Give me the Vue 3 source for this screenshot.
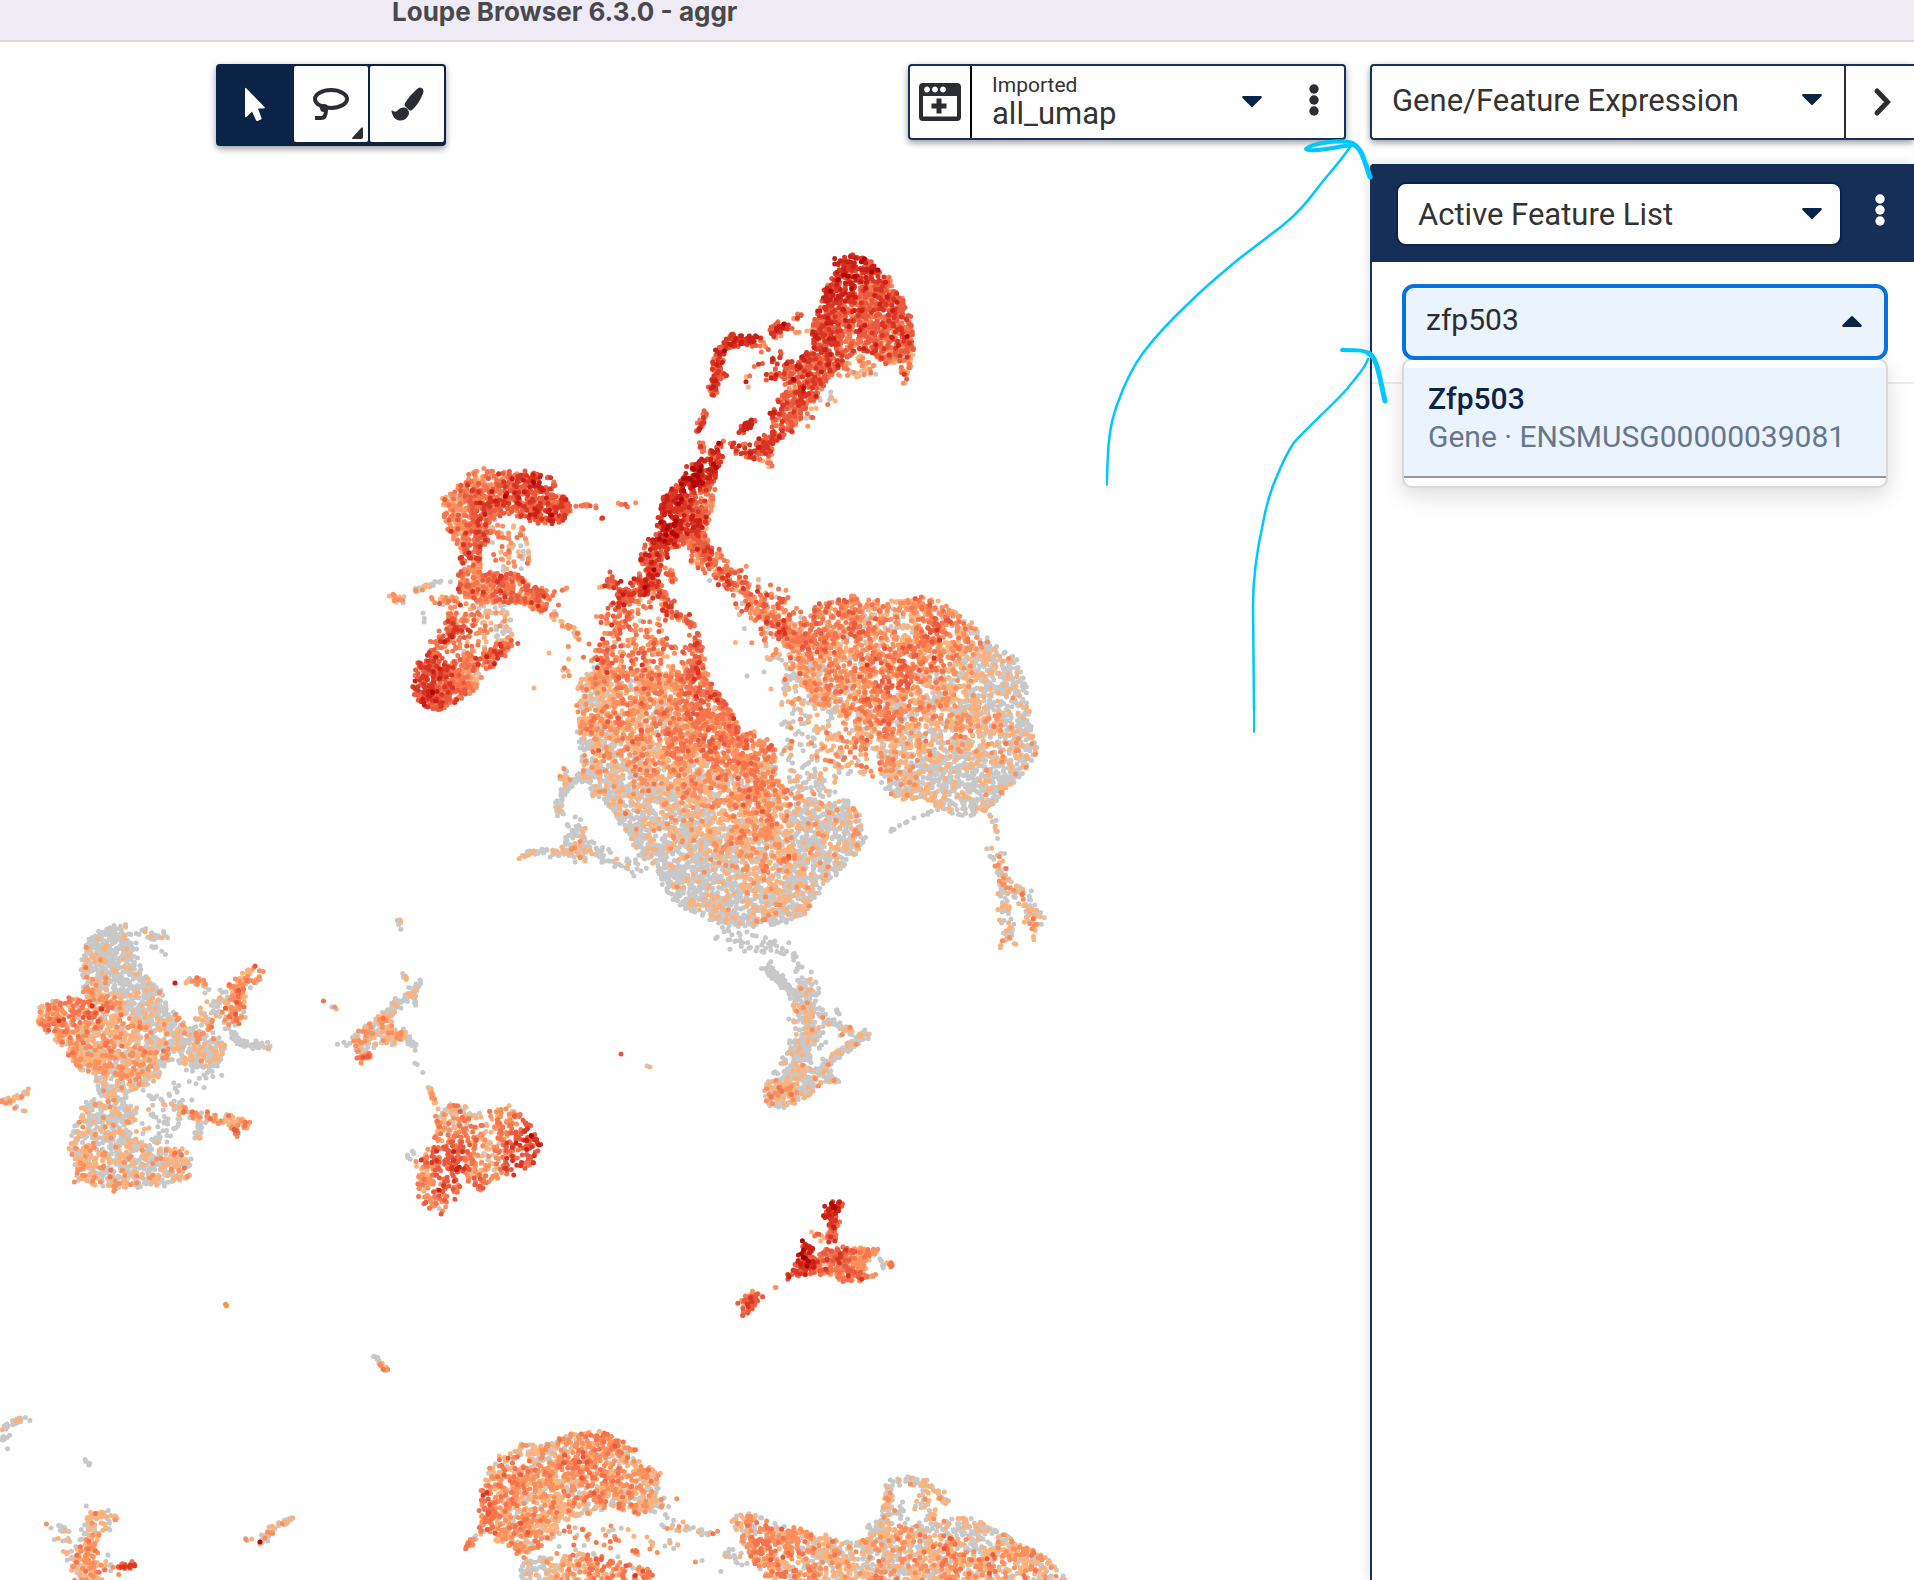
<script setup>
import { ref } from 'vue'

const COLORS = ['#c8c8c8', '#fdb27c', '#fc8f5b', '#f6734e', '#e85a3f', '#da3522', '#c91f16', '#b30505', '#8c0000']

// Filled clusters: o = outline, d = points per square unit, h = [x, y, expression level] anchors
const clusters = [
  { d: 0.15, o: [835,260,853,253,870,258,880,273,893,282,900,297,907,308,913,322,915,345,912,362,907,385,902,383,902,363,880,363,873,353,853,353,840,367,830,377,823,390,810,407,793,430,773,443,770,475,765,463,753,460,757,440,773,430,770,413,780,397,787,380,762,377,787,363,813,350,813,327,823,297,832,277], h: [850,260,6.3,826,300,5.6,880,310,4.5,860,330,4.3,905,345,4.2,850,350,4.6,800,370,5,790,400,4.8,765,450,5.2,905,378,2.4,770,472,2.4,795,425,4] },
  { d: 0.05, o: [853,353,880,363,880,375,850,382,835,380,840,367], h: [860,365,2] },
  { d: 0.02, o: [823,390,842,395,815,425,800,425], h: [820,405,2.6] },
  { d: 0.15, o: [723,440,722,460,715,477,712,507,705,530,712,553,695,547,673,550,650,550,657,530,663,497,680,483,687,467,707,457,715,445], h: [695,472,7,672,520,6.5,710,505,2.8,700,545,4,718,448,5.6,680,500,6,697,495,5,690,525,5] },
  { d: 0.14, o: [473,470,513,472,540,473,557,482,550,492,567,497,573,510,557,525,537,525,527,517,503,515,490,520,492,540,480,547,480,573,513,573,530,583,550,607,540,612,513,603,480,603,458,593,460,560,457,543,443,520,443,500,460,483], h: [530,480,5.2,455,500,3,550,510,4.9,485,495,4.5,450,520,2.7,480,540,4.2,470,590,2.8,515,590,3.5,475,473,2] },
  { d: 0.035, o: [492,520,527,525,530,570,490,572], h: [500,540,2.8,525,555,1] },
  { d: 0.045, o: [450,605,510,600,515,640,500,655,450,660,445,630], h: [460,630,3.5,500,620,1] },
  { d: 0.16, o: [420,660,445,665,470,655,480,670,478,688,460,700,440,710,418,705,413,690,415,670], h: [420,690,5.4,440,700,4.9,472,680,2.4,430,670,5] },
  { d: 0.12, o: [578,680,578,703,580,747,583,773,590,793,612,810,637,850,658,870,663,890,683,907,720,923,753,927,787,923,807,913,817,893,840,870,855,857,865,840,860,813,847,800,827,803,793,793,777,777,775,747,753,733,740,730,733,713,720,693,707,680,700,653,683,673,657,670,627,670,597,667], h: [590,690,1,620,710,2.3,600,760,1,680,735,2.5,715,700,3.8,720,740,3,760,780,2.3,770,800,2.1,700,780,1.4,650,760,1.3,620,800,0,690,830,0.2,740,840,1.2,770,850,1.4,700,880,-0.3,740,910,0,800,880,0,840,840,0.2,810,820,-0.1,650,830,0,640,680,2,590,790,0.2,670,860,-0.3] },
  { d: 0.035, o: [600,640,660,640,700,650,700,680,590,680], h: [640,660,2.6] },
  { d: 0.1, o: [800,623,820,603,853,597,887,600,930,597,957,613,990,640,1020,660,1027,693,1028,720,1035,737,1038,753,1023,773,1007,790,993,810,963,817,937,807,923,800,893,797,883,777,877,753,857,740,857,717,833,703,813,707,800,680,797,650], h: [900,660,3,890,680,3.2,920,650,3,835,615,3.1,800,640,2.8,870,620,2.5,940,620,3.1,960,620,2,900,628,1.2,860,690,2.2,880,720,2.5,840,660,1.8,920,700,1.6,960,690,1,990,660,0.4,1010,680,-0.2,980,720,0.9,1020,740,0.7,1000,700,0.1,940,740,1,900,760,1.1,960,790,-0.2,990,790,-0.1,930,780,0.4] },
  { d: 0.035, o: [783,690,800,670,860,715,870,760,880,780,845,775,830,800,790,790,780,740], h: [800,720,1,850,760,2,810,780,0.7] },
  { d: 0.16, o: [765,1085,780,1078,800,1065,830,1065,838,1080,820,1085,810,1095,785,1108,767,1106,764,1090], h: [800,1075,0,780,1098,0.9] },
  { d: 0.16, o: [785,1280,797,1260,803,1243,812,1245,812,1258,823,1250,847,1247,880,1250,867,1260,865,1277,850,1283,830,1275,810,1273], h: [800,1255,6.4,790,1272,5.4,835,1255,4,850,1275,3.5,868,1253,2.4,825,1265,3.6] },
  { d: 0.13, o: [84,943,107,925,125,925,134,943,139,967,161,990,175,1013,189,1028,214,1030,225,1047,218,1067,193,1067,171,1060,157,1077,139,1090,125,1100,100,1097,95,1077,79,1070,64,1047,46,1033,38,1023,41,1003,82,997,84,980,82,963], h: [110,935,-0.5,95,960,0.3,130,980,-0.6,112,970,-0.2,80,1010,2.4,95,1010,2.9,50,1010,2.2,60,1035,2,110,1030,1.4,100,1055,1.3,145,1040,0.9,150,1010,-0.2,190,1040,0.3,210,1055,-0.2,130,1075,0.9,115,1095,0] },
  { d: 0.11, o: [86,1100,118,1100,138,1107,137,1140,171,1147,191,1153,188,1177,175,1183,136,1187,112,1190,75,1180,73,1160,68,1147,75,1127], h: [75,1150,1.1,110,1175,0.9,100,1110,0.2,185,1165,0.9,120,1140,0.1,150,1165,0.1] },
  { d: 0.025, o: [140,1095,185,1085,180,1130,165,1145,140,1140], h: [160,1120,-0.5] },
  { d: 0.13, o: [352,1035,375,1018,392,1012,392,1030,407,1038,400,1045,378,1043,365,1055,355,1050], h: [380,1030,1.2,355,1045,0.7] },
  { d: 0.08, o: [436,1107,457,1103,482,1112,507,1107,529,1120,543,1148,532,1167,514,1173,500,1177,479,1190,464,1177,457,1197,443,1213,425,1212,418,1193,416,1160,434,1147], h: [440,1112,1,500,1112,2.2,530,1130,5.5,540,1148,5.7,520,1150,4.7,525,1165,5.3,470,1135,3.6,460,1150,5,445,1170,5,425,1180,2,440,1200,3.7,435,1125,3.6,480,1160,1.2,480,1185,3.8,475,1120,1.6,455,1125,1.3,490,1145,1.8] },
  { d: 0.11, o: [86,1515,95,1512,118,1512,114,1530,100,1533,95,1545,98,1560,100,1582,75,1582,70,1562,63,1550,80,1545,82,1525], h: [90,1550,1.8,75,1540,0.6] },
  { d: 0.11, o: [523,1442,542,1445,572,1433,607,1432,635,1448,646,1463,660,1475,656,1490,664,1507,644,1515,619,1508,599,1510,582,1517,558,1523,556,1537,533,1550,521,1560,513,1547,497,1543,493,1533,480,1533,478,1503,487,1473,503,1457], h: [490,1500,2.8,520,1480,2.1,580,1460,2.6,620,1460,2.2,630,1490,2.3,560,1500,1.4,520,1530,1.8,540,1510,1.2,650,1505,1,540,1445,1] },
  { d: 0.08, o: [520,1560,560,1557,590,1550,620,1560,650,1570,655,1582,522,1582], h: [530,1570,0,570,1575,1.3,610,1570,3] },
  { d: 0.014, o: [555,1525,640,1520,660,1560,560,1560], h: [600,1540,2.2] },
  { d: 0.1, o: [731,1522,742,1512,754,1515,770,1520,795,1528,823,1535,848,1542,864,1540,868,1527,885,1517,897,1527,921,1525,942,1523,962,1517,991,1527,1019,1543,1048,1557,1060,1573,1075,1582,765,1582,760,1567,746,1557,741,1535], h: [760,1545,2.7,745,1525,1.4,800,1545,1.7,850,1560,1,900,1560,1,950,1550,1.8,1000,1570,1.8,1030,1560,1.2,990,1530,0,870,1540,0.6,960,1522,0] },
]

// Thin trails of cells: [centre line, width, count, expression level]
const trails = [
  [[713,390,716,372,718,355,727,342,745,340,758,341], 8, 150, 5.4],
  [[771,335,785,325], 9, 45, 5], [[790,321,803,312], 4, 7, 3.5], [[790,331,815,331], 4, 8, 2.4],
  [[755,345,782,352,765,362], 12, 18, 4.6], [[712,375,727,374], 8, 16, 4.4], [[714,385,712,398], 5, 12, 5],
  [[705,412,697,433], 4, 26, 5], [[700,442,704,452], 5, 9, 4], [[742,430,752,420], 6, 34, 5.6],
  [[725,445,755,455], 10, 26, 5], [[715,380,765,378], 16, 6, 4],
  [[655,545,650,575,645,590], 17, 150, 5.5], [[610,580,628,595,622,608], 9, 60, 4.6],
  [[645,585,620,600], 12, 45, 5], [[655,585,668,608,690,622,697,645,695,670], 11, 120, 4.3],
  [[671,570,673,582], 6, 22, 3.6], [[625,605,610,635,600,665], 26, 85, 3.6], [[650,600,640,640,655,660], 34, 75, 3.4],
  [[695,545,712,562,730,578,753,602,780,627,807,647], 20, 340, 3.7], [[765,590,800,615], 14, 22, 3.4], [[750,600,790,640], 40, 50, 1.5],
  [[575,506,597,506], 3, 9, 3], [[613,505,644,503], 3, 5, 4.5], [[601,517,603,519], 1, 3, 5],
  [[532,590,557,598], 9, 18, 4], [[560,590,571,588], 2, 3, 2.6], [[597,588,610,586], 3, 5, 3.4],
  [[391,597,404,600], 5, 20, 2], [[404,597,435,582], 4, 20, 0.6], [[435,582,452,581], 2, 4, -2],
  [[432,600,458,600], 6, 28, 1.5], [[423,610,424,622], 1, 3, -2], [[545,610,580,638], 7, 26, 2.2],
  [[571,640,566,675], 9, 8, 2.5], [[455,620,440,648,425,665], 12, 90, 4.6], [[510,645,475,665], 13, 80, 4],
  [[770,662,775,657], 6, 10, 0.5], [[785,690,790,665], 8, 12, -0.5], [[785,625,800,670], 24, 80, 1.6],
  [[940,808,910,820,880,838], 4, 12, -0.5], [[990,812,998,838], 5, 10, 0.6],
  [[995,850,1003,870,1013,890,1028,905,1036,920,1029,930], 12, 110, 1], [[1003,890,1005,920,1012,942], 12, 50, 0.6],
  [[585,775,568,785,560,800,559,815], 6, 80, -0.6], [[563,770,566,785], 7, 16, 1.4],
  [[574,825,577,848,588,855], 17, 75, 0.2], [[520,855,535,853,580,853], 6, 60, 0.2], [[590,850,640,868], 16, 40, -0.8],
  [[725,932,760,950,795,945], 17, 50, -2], [[763,967,775,975,797,998], 7, 75, -2], [[795,955,798,972], 4, 14, -2],
  [[805,983,806,1020,812,1045], 19, 220, 0], [[815,1015,835,1025,860,1035], 8, 45, 0.2],
  [[868,1033,850,1045,825,1065], 7, 90, 0.1], [[835,1010,842,1014], 3, 6, -2], [[805,1045,790,1070], 22, 110, -0.5],
  [[825,1080,840,1081], 5, 14, 0], [[838,1205,825,1215], 8, 45, 6], [[833,1215,833,1240], 9, 50, 4.5],
  [[812,1233,840,1240], 10, 16, 2.8], [[888,1264,893,1265], 3, 7, 2.4], [[880,1257,883,1270], 4, 5, -2],
  [[865,1280,876,1273], 4, 7, 3], [[742,1315,750,1302,757,1296], 11, 60, 4.2], [[771,1290,776,1287], 1, 2, 1.5],
  [[140,932,170,938], 7, 20, 0.4], [[150,945,165,953], 4, 6, -2], [[188,981,208,984], 8, 24, 1.6],
  [[257,975,245,980,235,995,233,1025], 14, 140, 2.2], [[225,990,210,1020,195,1030], 18, 70, 1.1],
  [[232,1035,245,1045,270,1046], 5, 60, -2], [[150,1070,215,1075,175,1095], 22, 24, -1],
  [[176,1105,190,1112,215,1120,250,1124], 9, 110, 1.6], [[232,1128,238,1134], 5, 16, 2.6], [[200,1115,197,1138], 6, 28, -0.2],
  [[0,1103,15,1098,30,1091], 5, 34, 0.9], [[16,1107,24,1110], 3, 4, 0.8], [[399,919,399,925], 2, 6, 1], [[400,928,401,931], 1, 1, -2],
  [[403,974,406,979], 3, 6, 0], [[420,982,410,995,395,1005,385,1018], 6, 80, 0], [[414,990,416,1006], 3, 9, -2],
  [[360,1058,370,1056], 6, 18, 3], [[405,1037,418,1050], 4, 16, -1], [[395,1040,405,1033], 6, 12, 2],
  [[317,997,350,1018], 2, 4, 1.5], [[335,1044,350,1043], 4, 4, -1], [[413,1060,425,1075], 2, 3, -2],
  [[428,1085,433,1097,437,1106], 4, 16, 1.2], [[408,1157,416,1150], 4, 6, -2],
  [[226,1304,226,1306], 1, 3, 2.4], [[374,1354,380,1363], 3, 9, -2], [[379,1363,389,1372], 3, 11, 1.8],
  [[0,1429,22,1419], 4, 28, -0.2], [[25,1417,30,1421], 1, 2, -2], [[0,1440,9,1435], 4, 8, -2], [[8,1449,8,1450], 1, 1, -2],
  [[85,1460,91,1465], 2, 7, -2], [[86,1506,86,1507], 1, 1, -2], [[50,1528,60,1525,68,1540,52,1540], 8, 18, 0.3],
  [[118,1566,135,1566], 5, 24, 4.4], [[100,1555,115,1575], 12, 12, 1.4], [[291,1516,280,1525,268,1535,259,1546], 6, 44, 0.8],
  [[244,1540,252,1539], 2, 4, 2.4], [[463,1548,478,1537], 4, 20, 1.8], [[677,1499,677,1500], 1, 1, 3],
  [[663,1524,715,1535], 9, 32, 1.4], [[650,1545,690,1545], 12, 8, 1], [[650,1480,670,1520], 10, 12, -0.5],
  [[887,1517,890,1485,905,1480,925,1483,947,1502], 7, 110, 0.5], [[918,1490,925,1505,938,1520], 12, 34, 1.1],
  [[895,1505,910,1520], 14, 14, -1], [[722,1550,745,1565], 14, 18, -1], [[690,1557,718,1575], 8, 3, 1.5],
]

const singles = [[175,983,6], [260,1542,7], [621,1054,4], [647,1066,0], [650,1067,1], [747,676,0], [764,672,0], [771,689,1], [534,688,1], [549,653,1]]

let seed = 20461
function rand() {
  seed = (seed + 0x6d2b79f5) | 0
  let t = Math.imul(seed ^ (seed >>> 15), 1 | seed)
  t = (t + Math.imul(t ^ (t >>> 7), 61 | t)) ^ t
  return ((t ^ (t >>> 14)) >>> 0) / 4294967296
}
const gauss = () => rand() + rand() + rand() + rand() - 2

const layers = COLORS.map(() => [])
function put(x, y, level) {
  layers[level].push(`M${x.toFixed(1)} ${y.toFixed(1)}h0`)
}
// Expression varies per cell, with a slow ripple so that neighbours resemble each other
function plot(x, y, heat) {
  const ripple = heat > 0.5 ? Math.sin(x / 8 + y / 19) * Math.sin(y / 9 - x / 23) * 0.5 : 0
  const level = Math.round(heat * 0.89 - 0.5 + ripple + gauss() * 1.75)
  put(x, y, Math.max(0, Math.min(COLORS.length - 1, level)))
}
function inside(o, x, y) {
  let hit = false
  for (let i = 0, j = o.length - 2; i < o.length; j = i, i += 2) {
    if (o[i + 1] > y !== o[j + 1] > y && x < ((o[j] - o[i]) * (y - o[i + 1])) / (o[j + 1] - o[i + 1]) + o[i]) hit = !hit
  }
  return hit
}
function heatAt(h, x, y) {
  let sum = 0
  let weight = 0
  for (let i = 0; i < h.length; i += 3) {
    const d2 = (x - h[i]) ** 2 + (y - h[i + 1]) ** 2 + 60
    const w = 1 / (d2 * d2)
    sum += w * h[i + 2]
    weight += w
  }
  return sum / weight
}
for (const { o, d, h } of clusters) {
  const xs = o.filter((_, i) => i % 2 === 0)
  const ys = o.filter((_, i) => i % 2 === 1)
  const x0 = Math.min(...xs), x1 = Math.max(...xs), y0 = Math.min(...ys), y1 = Math.max(...ys)
  const tries = Math.round((x1 - x0) * (y1 - y0) * d)
  for (let i = 0; i < tries; i++) {
    const x = x0 + rand() * (x1 - x0)
    const y = y0 + rand() * (y1 - y0)
    if (inside(o, x, y)) plot(x + gauss() * 2, y + gauss() * 2, heatAt(h, x, y))
  }
}
for (const [line, width, count, heat] of trails) {
  const parts = []
  let total = 0
  for (let i = 0; i + 3 < line.length; i += 2) {
    const len = Math.hypot(line[i + 2] - line[i], line[i + 3] - line[i + 1])
    parts.push([i, len])
    total += len
  }
  for (let n = 0; n < count; n++) {
    let t = rand() * total
    let k = 0
    while (k < parts.length - 1 && t > parts[k][1]) t -= parts[k++][1]
    const [i, len] = parts[k]
    const f = t / len
    plot(
      line[i] + f * (line[i + 2] - line[i]) + gauss() * width * 0.6,
      line[i + 1] + f * (line[i + 3] - line[i + 1]) + gauss() * width * 0.6,
      heat,
    )
  }
}
singles.forEach(([x, y, level]) => put(x, y, level))
const paths = layers.map((pts, i) => ({ color: COLORS[i], d: pts.join('') }))

const tool = ref('pointer')
const query = ref('zfp503')
</script>

<template>
  <div class="window">
    <header class="titlebar"><h1>Loupe Browser 6.3.0 - aggr</h1></header>
    <main class="workspace">
      <section class="stage" aria-label="Projection">
        <svg class="plot" viewBox="0 42 1370 1538" preserveAspectRatio="xMinYMin slice" aria-hidden="true">
          <path v-for="p in paths" :key="p.color" :d="p.d" :stroke="p.color" />
        </svg>
        <div class="tools" role="toolbar" aria-label="Selection tools">
          <button type="button" class="tool" :class="{ active: tool === 'pointer' }" aria-label="Pointer" @click="tool = 'pointer'">
            <svg width="36" height="36" viewBox="0 0 36 36"><path fill="currentColor" d="M8 3q0-2 1.500-.5L27.500 21q1 1.500-1 1.500h-5.500l3.500 9.500q.5 1-.5 1.500l-3.500 1.500q-1 .3-1.500-.7L15 25.500l-5.500 5.500q-1.500 1-1.500-.8z" /></svg>
          </button>
          <button type="button" class="tool" :class="{ active: tool === 'lasso' }" aria-label="Lasso" @click="tool = 'lasso'">
            <svg width="40" height="36" viewBox="0 0 40 36"><g fill="none" stroke="currentColor" stroke-width="4"><ellipse cx="20" cy="13" rx="16" ry="9" /><path d="M4 32h6q5 0 5-8" /></g><circle cx="13" cy="22" r="4" fill="currentColor" /></svg>
            <svg class="corner" width="12" height="12" viewBox="0 0 12 12"><path fill="currentColor" d="M1 12Q-1 12 1 10L9 1q2-2 2 1v8q0 2-2 2z" /></svg>
          </button>
          <button type="button" class="tool" :class="{ active: tool === 'brush' }" aria-label="Brush" @click="tool = 'brush'">
            <svg width="36" height="36" viewBox="0 0 36 36"><path fill="currentColor" d="M28 3q3-3 6 0 1 2 0 4.500Q30 18 23 24q-1.500 1-3 0l-4-4q-1-1.500 0-3Q21 9 28 3zM14 21.500q2-.5 4 1l1 1.500q2 3 0 6-3 5-9 4.500Q4 33 2.500 25.500q0-1.500 1.500-.5 3 1.500 4.500-.5 2-2.500 5.500-3z" /></svg>
          </button>
        </div>
        <div class="projection">
          <button type="button" class="add" aria-label="Add projection">
            <svg width="42" height="38" viewBox="0 0 42 38"><path fill="#2b2d33" fill-rule="evenodd" d="M4 0h34q4 0 4 4v30q0 4-4 4H4q-4 0-4-4V4q0-4 4-4zM4 13v20.500h34V13zM8 3.500a3 3 0 1 0 .01 0zM16 3.500a3 3 0 1 0 .01 0zM24 3.500a3 3 0 1 0 .01 0z" /><path stroke="#2b2d33" stroke-width="5" d="M12.500 23h15M20 15.500v15" /></svg>
          </button>
          <div class="source">
            <label for="projection">Imported</label>
            <select id="projection"><option>all_umap</option></select>
          </div>
          <svg class="caret" width="20" height="12" viewBox="0 0 20 12"><path d="M1 0h18q1.500 1 .3 2.300L11 10.500q-1 1-2 0L.7 2.300Q-.5 1 1 0z" /></svg>
          <button type="button" class="dots" aria-label="Projection menu">
            <svg width="10" height="32" viewBox="0 0 10 32"><g fill="currentColor"><circle cx="5" cy="5" r="4.700" /><circle cx="5" cy="16" r="4.700" /><circle cx="5" cy="27" r="4.700" /></g></svg>
          </button>
        </div>
      </section>

      <aside class="side">
        <div class="mode">
          <div class="mode-select">
            <select aria-label="Analysis mode"><option>Gene/Feature Expression</option></select>
            <svg class="caret" width="20" height="12" viewBox="0 0 20 12"><path d="M1 0h18q1.500 1 .3 2.300L11 10.500q-1 1-2 0L.7 2.300Q-.5 1 1 0z" /></svg>
          </div>
          <button type="button" class="collapse" aria-label="Collapse panel">
            <svg width="20" height="30" viewBox="0 0 20 30"><path fill="none" stroke="#2b2d33" stroke-width="5" stroke-linecap="round" d="M4 4l10.500 11L4 26" /></svg>
          </button>
        </div>
        <div class="panel">
          <div class="panel-head">
            <div class="list-select">
              <select aria-label="Feature list"><option>Active Feature List</option></select>
              <svg class="caret" width="20" height="12" viewBox="0 0 20 12"><path d="M1 0h18q1.500 1 .3 2.300L11 10.500q-1 1-2 0L.7 2.300Q-.5 1 1 0z" /></svg>
            </div>
            <button type="button" class="dots light" aria-label="Feature list menu">
              <svg width="10" height="32" viewBox="0 0 10 32"><g fill="currentColor"><circle cx="5" cy="5" r="4.700" /><circle cx="5" cy="16" r="4.700" /><circle cx="5" cy="27" r="4.700" /></g></svg>
            </button>
          </div>
          <div class="search">
            <div class="combo">
              <input v-model="query" type="text" role="combobox" aria-label="Search features" aria-expanded="true" aria-controls="matches" />
              <svg class="caret" width="20" height="12" viewBox="0 0 20 12"><path d="M1 11h18q1.500-1 .3-2.300L11 .5q-1-1-2 0L.7 8.700Q-.5 10 1 11z" /></svg>
            </div>
            <ul id="matches" class="matches" role="listbox">
              <li role="option" aria-selected="true">
                <strong>Zfp503</strong>
                <span>Gene · ENSMUSG00000039081</span>
              </li>
            </ul>
          </div>
        </div>
      </aside>

      <svg class="notes" viewBox="0 42 1914 1538" preserveAspectRatio="xMinYMin meet" aria-hidden="true">
        <g fill="none" stroke="#00c8ff" stroke-linecap="round" stroke-linejoin="round">
          <path stroke-width="2" d="M1107 485V470M1254 732V690" />
          <path stroke-width="2.500" d="M1107 478C1108 450 1108 430 1117 405C1124 385 1132 368 1143 353C1158 333 1174 317 1190 302C1206 286 1223 272 1240 258L1282 226C1300 212 1310 198 1323 181C1337 165 1343 158 1352 144" />
          <path stroke-width="4" d="M1353 143C1340 139 1312 143 1306 149C1312 153 1335 147 1352 145" />
          <path stroke-width="5" d="M1350 144C1361 144 1364 160 1370 177" />
          <path stroke-width="2.500" d="M1254 710L1253 605C1253 575 1257 550 1263 523C1267 501 1271 489 1277 476C1282 464 1287 453 1293 444C1302 432 1330 408 1347 389C1358 375 1366 367 1368 359" />
          <path stroke-width="4" d="M1342 350C1358 350 1366 350 1371 355" />
          <path stroke-width="5" d="M1368 353C1377 355 1380 380 1385 401" />
        </g>
      </svg>
    </main>
  </div>
</template>

<style>
body {
  margin: 0;
}
</style>

<style scoped>
.window {
  display: flex;
  flex-direction: column;
  min-height: 100vh;
  overflow: hidden;
  background: #fff;
  color: #333;
  font-family: Roboto, "Liberation Sans", sans-serif;
}
.window *,
.window {
  box-sizing: border-box;
}
button,
select,
input {
  margin: 0;
  padding: 0;
  border: 0;
  background: none;
  color: inherit;
  font: inherit;
  outline: 0;
}
select {
  appearance: none;
  width: 100%;
  cursor: pointer;
}
button {
  display: flex;
  align-items: center;
  justify-content: center;
  cursor: pointer;
}
svg {
  display: block;
  flex: none;
}
.titlebar {
  padding: 0 0 16px 392px;
  border-bottom: 2px solid #d9d8dc;
  background: #eeebf5;
}
h1 {
  margin: 0;
  color: #49484b;
  font: 700 26px/24px Inter, sans-serif;
}
.workspace {
  position: relative;
  display: flex;
  flex: 1;
}
.stage {
  position: relative;
  display: flex;
  flex: 1;
  align-items: flex-start;
  justify-content: space-between;
  padding: 22px 24px 0 216px;
}
.plot,
.notes {
  position: absolute;
  inset: 0;
  width: 100%;
  height: 100%;
}
.plot path {
  fill: none;
  stroke-width: 5;
  stroke-linecap: round;
}
.notes {
  z-index: 3;
  pointer-events: none;
}
.tools,
.projection {
  position: relative;
  display: flex;
  box-shadow: 0 3px 6px rgba(0, 0, 0, 0.35), 0 0 14px rgba(0, 0, 0, 0.06);
}
.tools {
  gap: 2px;
  height: 82px;
  padding: 2px 2px 4px;
  border-radius: 4px;
  background: #0b2347;
}
.tool {
  position: relative;
  width: 74px;
  border-radius: 2px;
  background: #fff;
  color: #2b2d33;
}
.tool.active {
  background: #0b2347;
  color: #fff;
}
.corner {
  position: absolute;
  right: 4px;
  bottom: 3px;
}
.projection {
  align-items: stretch;
  width: 438px;
  height: 76px;
  border: 2px solid #15305a;
  border-radius: 4px;
  background: #fff;
}
.add {
  width: 62px;
  border-right: 2px solid #000;
}
.source {
  display: flex;
  flex: 1;
  flex-direction: column;
  padding: 6px 0 0 20px;
}
.source label {
  font-size: 21px;
  line-height: 26px;
}
.source select {
  font-size: 31px;
  line-height: 32px;
}
.caret {
  align-self: center;
  fill: #0b2347;
  pointer-events: none;
}
.dots {
  color: #2b2d33;
}
.projection .dots {
  width: 20px;
  margin: 0 20px 4px 42px;
}
.side {
  display: flex;
  flex: none;
  flex-direction: column;
  gap: 24px;
  width: 544px;
  padding-top: 22px;
}
.mode {
  display: flex;
  height: 76px;
  border: 2px solid #15305a;
  border-right: 0;
  border-radius: 4px 0 0 4px;
  background: #fff;
  box-shadow: 0 3px 6px rgba(0, 0, 0, 0.35), 0 0 14px rgba(0, 0, 0, 0.06);
  font-size: 31px;
}
.mode-select {
  display: flex;
  flex: 1;
  padding: 0 22px 4px 20px;
}
.collapse {
  width: 70px;
  padding-left: 6px;
  border-left: 2px solid #2b2d33;
}
.panel {
  display: flex;
  flex: 1;
  flex-direction: column;
  border-left: 2px solid #15305a;
  border-radius: 4px 0 0 0;
  background: #fff;
  box-shadow: 0 0 12px rgba(0, 0, 0, 0.15);
}
.panel-head {
  display: flex;
  padding: 18px 0 16px 24px;
  background: #152f56;
  font-size: 31px;
}
.list-select {
  display: flex;
  flex: 1;
  height: 64px;
  padding: 0 18px 0 20px;
  border: 2px solid #0b2347;
  border-radius: 10px;
  background: #fff;
}
.light {
  width: 72px;
  margin: 0 0 8px;
  padding-left: 4px;
  color: #fff;
}
.search {
  position: relative;
  padding: 22px 26px 22px 30px;
  border-bottom: 2px solid #ececec;
}
.combo {
  position: relative;
  z-index: 2;
  display: flex;
  height: 76px;
  padding: 0 22px 0 20px;
  border: 4px solid #0672dd;
  border-radius: 12px;
  background: #ebf3fc;
  color: #2b2d33;
  font-size: 30px;
}
.combo input {
  flex: 1;
  min-width: 0;
  padding-bottom: 6px;
}
.matches {
  position: absolute;
  top: 96px;
  right: 26px;
  left: 30px;
  z-index: 1;
  margin: 0;
  padding: 8px 0;
  border: 2px solid #d9d9d9;
  border-radius: 10px;
  background: #fff;
  box-shadow: 0 8px 22px rgba(0, 0, 0, 0.14);
  list-style: none;
}
.matches li {
  display: flex;
  flex-direction: column;
  height: 110px;
  padding: 12px 0 0 24px;
  border-bottom: 2px solid #979797;
  background: #ebf3fc;
  font-size: 30px;
  line-height: 38px;
  white-space: nowrap;
}
.matches strong {
  color: #0b2347;
  font-weight: 500;
}
.matches span {
  color: #64778f;
}
</style>
